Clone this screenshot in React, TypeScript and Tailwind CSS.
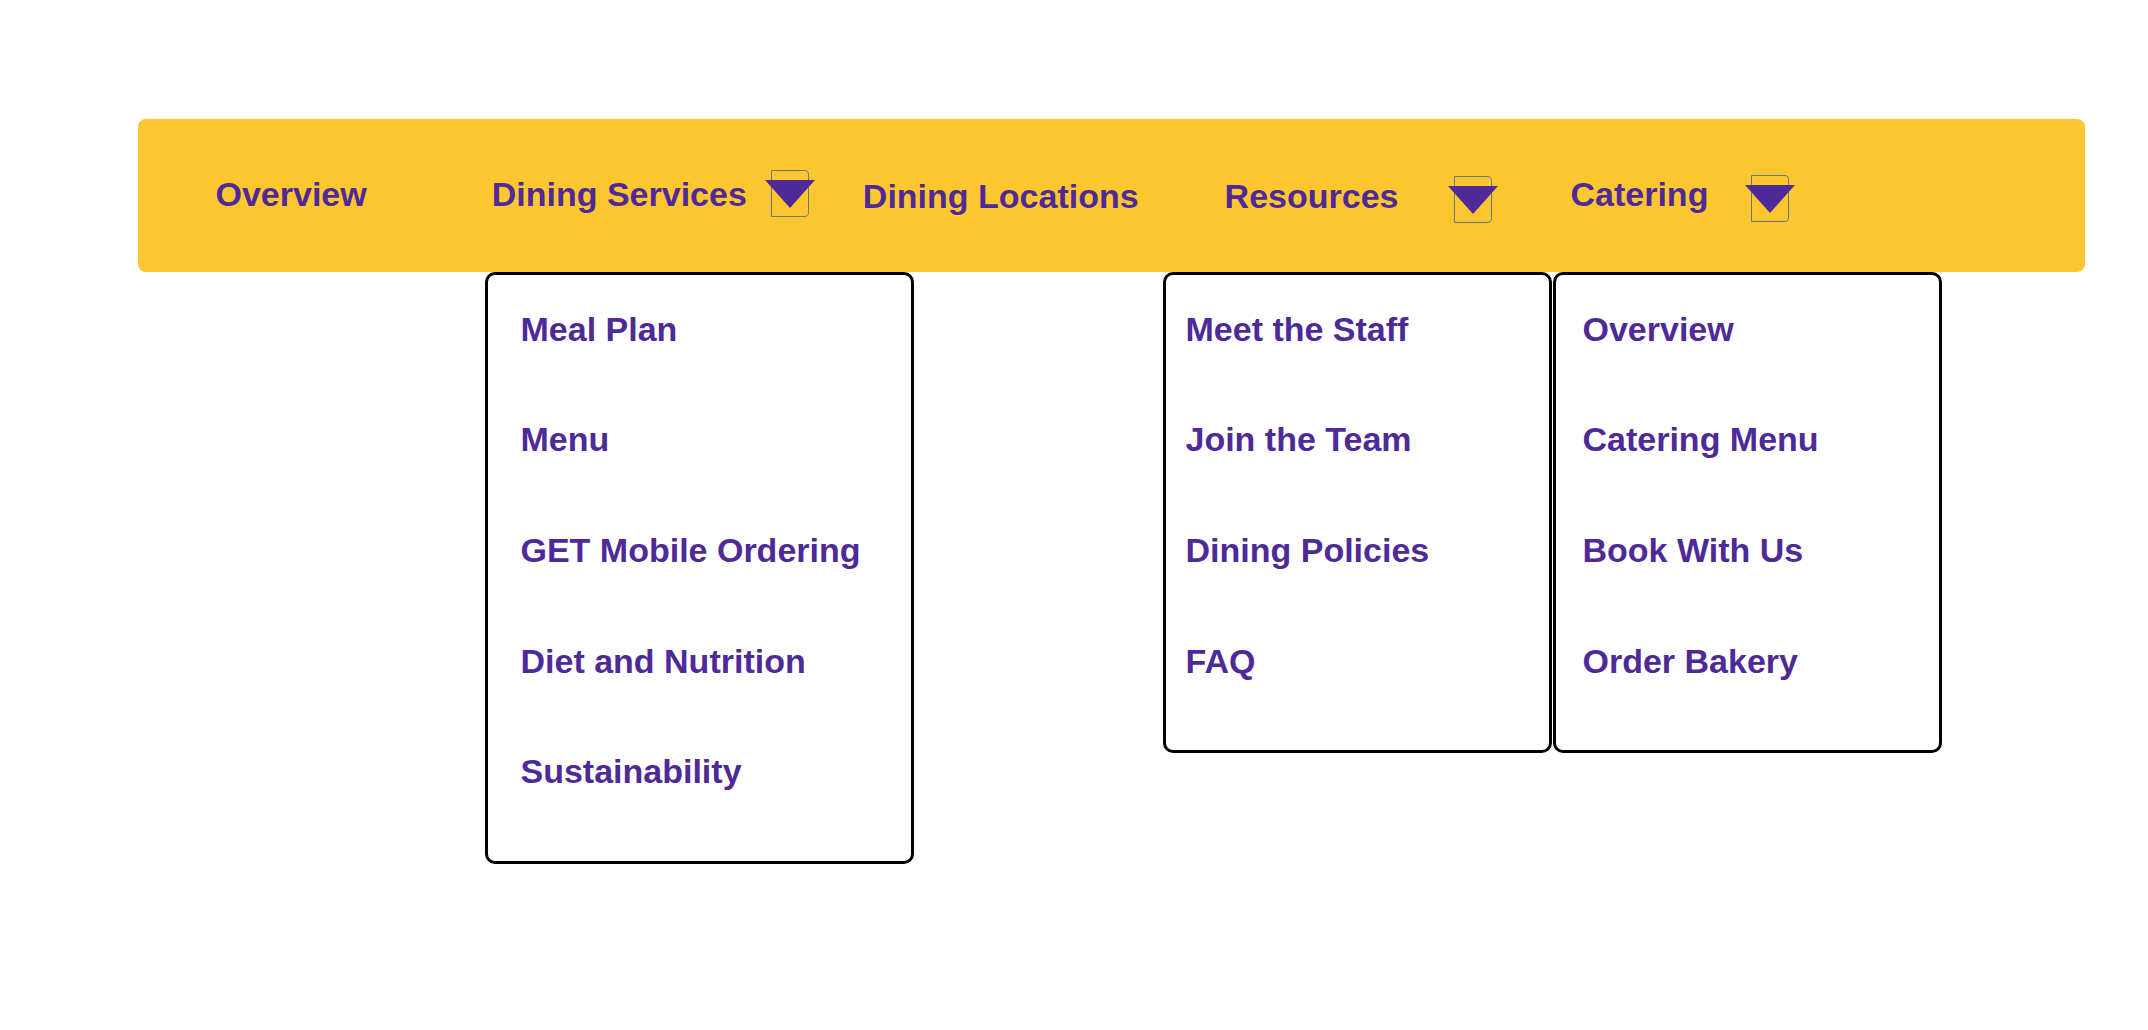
const purple = "text-[#4e2a98]";

const menus = [
  {
    left: "left-[347px]",
    width: "w-[429px]",
    pad: "pl-[32.5px]",
    items: ["Meal Plan", "Menu", "GET Mobile Ordering", "Diet and Nutrition", "Sustainability"],
  },
  {
    left: "left-[1025px]",
    width: "w-[389px]",
    pad: "pl-[19.5px]",
    items: ["Meet the Staff", "Join the Team", "Dining Policies", "FAQ"],
  },
  {
    left: "left-[1415px]",
    width: "w-[389px]",
    pad: "pl-[26.5px]",
    items: ["Overview", "Catering Menu", "Book With Us", "Order Bakery"],
  },
];

function Toggle({ className }: { className: string }) {
  return (
    <span className={`relative block h-[47px] w-[38px] shrink-0 rounded-r-[4px] border border-[#6f7487] ${className}`}>
      <svg
        className="absolute left-1/2 top-[9px] -translate-x-1/2"
        width="50"
        height="28"
        viewBox="0 0 50 28"
      >
        <polygon points="0,0 50,0 25,28" fill="#4e2a98" />
      </svg>
    </span>
  );
}

export default function App() {
  return (
    <div
      className="min-h-[1030px] w-[2148px] bg-white pt-[119px]"
      style={{ fontFamily: '"Liberation Sans", Arial, sans-serif' }}
    >
      <nav className="relative ml-[138px] flex h-[153px] w-[1947px] items-start rounded-lg bg-[#ffc72f] text-[34px] font-bold leading-[39px]">
        <a className={`ml-[77.5px] mt-[56px] ${purple}`}>Overview</a>
        <a className={`ml-[125px] mt-[56px] ${purple}`}>Dining Services</a>
        <Toggle className="ml-[24.5px] mt-[51px]" />
        <a className={`ml-[53.5px] mt-[57.5px] ${purple}`}>Dining Locations</a>
        <a className={`ml-[86px] mt-[57.5px] ${purple}`}>Resources</a>
        <Toggle className="ml-[55.5px] mt-[57px]" />
        <a className={`ml-[78.5px] mt-[56px] ${purple}`}>Catering</a>
        <Toggle className="ml-[43px] mt-[56px]" />

        {menus.map((menu) => (
          <ul
            key={menu.items[0]}
            className={`absolute top-full ${menu.left} ${menu.width} rounded-[10px] border-[3px] border-black bg-white pb-[33.5px] ${menu.pad}`}
          >
            {menu.items.map((item) => (
              <li key={item} className="py-[35.5px] leading-[39.7px] first:-mt-px">
                <a className={purple}>{item}</a>
              </li>
            ))}
          </ul>
        ))}
      </nav>
    </div>
  );
}
